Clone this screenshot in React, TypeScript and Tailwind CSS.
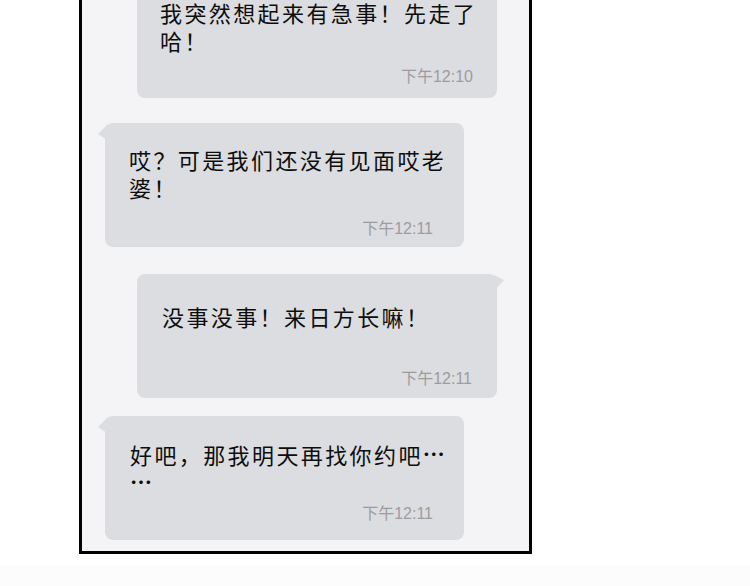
import type { ReactNode } from 'react'

const cjk = 'font-["Noto_Sans_CJK_SC","Noto_Sans",sans-serif]'

type Msg = {
  lines: ReactNode[]
  time: string
  side: 'left' | 'right'
  box: string
  text: string
  stamp: string
  tail?: boolean
}

// ellipsis sits at mid-height in the screenshot
const Dots = () => <span className="relative -top-[2px] font-bold">…</span>

const messages: Msg[] = [
  {
    lines: ['我突然想起来有急事！先走了', '哈！'],
    time: '下午12:10',
    side: 'right',
    box: '-mt-[27px] ml-[55px] w-[360px] h-[125px]',
    text: 'pt-[25px] pl-[23px]',
    stamp: 'pb-[13px] pr-[24px]',
  },
  {
    lines: ['哎？可是我们还没有见面哎老', '婆！'],
    time: '下午12:11',
    side: 'left',
    box: 'mt-[25px] ml-[23px] w-[359px] h-[124px]',
    text: 'pt-[22px] pl-[24px]',
    stamp: 'pb-[10px] pr-[31px]',
    tail: true,
  },
  {
    lines: ['没事没事！来日方长嘛！'],
    time: '下午12:11',
    side: 'right',
    box: 'mt-[27px] ml-[55px] w-[360px] h-[124px]',
    text: 'pt-[28px] pl-[25px]',
    stamp: 'pb-[11px] pr-[25px]',
    tail: true,
  },
  {
    lines: [
      <>
        好吧，那我明天再找你约吧<Dots />
      </>,
      <Dots />,
    ],
    time: '下午12:11',
    side: 'left',
    box: 'mt-[18px] ml-[23px] w-[359px] h-[124px]',
    text: 'pt-[24px] pl-[25px]',
    stamp: 'pb-[18px] pr-[31px]',
    tail: true,
  },
]

function Bubble({ m }: { m: Msg }) {
  return (
    <div className={`relative shrink-0 flex flex-col rounded-lg bg-[#dcdde0] ${m.box}`}>
      {/* little speech tail */}
      {m.tail && m.side === 'left' && (
        <svg className="absolute -left-[8px] top-0" width="12" height="20" viewBox="0 0 12 20">
          <polygon points="11,1 1,11 10,17" fill="#dcdde0" />
        </svg>
      )}
      {m.tail && m.side === 'right' && (
        <svg className="absolute -right-[9px] top-0" width="12" height="20" viewBox="0 0 12 20">
          <polygon points="0,1 10,6 1,16" fill="#dcdde0" />
        </svg>
      )}
      <div className={`${cjk} text-[22px] leading-[28px] tracking-[2.4px] text-[#0d0d0d] ${m.text}`}>
        {m.lines.map((l, i) => (
          <div key={i}>{l}</div>
        ))}
      </div>
      <div
        className={`mt-auto self-end font-["Liberation_Sans","Noto_Sans_CJK_SC",sans-serif] text-[16px] leading-4 text-[#9c9c9e] ${m.stamp}`}
      >
        {m.time}
      </div>
    </div>
  )
}

export default function App() {
  return (
    <div lang="zh-CN" className="w-[750px] h-[586px] bg-white overflow-hidden">
      <div className="ml-[79px] w-[453px] h-[554px] border-x-[3px] border-b-[3px] border-black bg-[#f4f4f6] flex flex-col overflow-hidden">
        {messages.map((m, i) => (
          <Bubble key={i} m={m} />
        ))}
      </div>
      <div className="mt-[11px] h-[21px] bg-[#fcfcfc]" />
    </div>
  )
}
